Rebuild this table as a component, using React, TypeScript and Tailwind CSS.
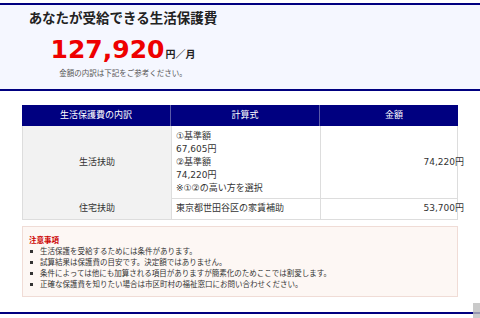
export default function App() {
  const notes = [
    "生活保護を受給するためには条件があります。",
    "試算結果は保護費の目安です。決定額ではありません。",
    "条件によっては他にも加算される項目がありますが簡素化のためここでは割愛します。",
    "正確な保護費を知りたい場合は市区町村の福祉窓口にお問い合わせください。",
  ];
  return (
    <div className="relative w-[480px] h-[318px] overflow-hidden bg-white font-['DejaVu_Sans','Noto_Sans_CJK_JP',sans-serif] text-[#333]">
      <div className="pt-[3px]">
        <div className="h-[88px] border-y-2 border-[#000080] bg-[#f5f7ff]">
          <div className="w-[246px] text-center">
            <div className="h-[26px] text-[13.5px] font-bold leading-[26px] text-[#222]">
              あなたが受給できる生活保護費
            </div>
            <div className="mt-[4px] flex h-[30px] items-baseline justify-center">
              <span className="text-[25px] font-bold leading-[30px] text-[#ee0000]">127,920</span>
              <span className="ml-[1px] text-[10px] font-bold text-[#222]">円／月</span>
            </div>
            <div className="mt-[3px] text-[7.5px] leading-[12px] text-[#555]">
              金額の内訳は下記をご参考ください。
            </div>
          </div>
        </div>

        <div className="mx-[22px] mt-[14px] text-[9px]">
          <div className="grid h-[21px] grid-cols-[148px_149px_149px] bg-[#000080] text-white">
            <div className="flex items-center justify-center">生活保護費の内訳</div>
            <div className="flex items-center justify-center border-l border-[#5a5aa8]">計算式</div>
            <div className="flex items-center justify-center border-l border-[#5a5aa8]">金額</div>
          </div>
          <div className="grid h-[73px] grid-cols-[148px_149px_149px] border-x border-b border-[#dddddd]">
            <div className="flex items-center justify-center bg-[#f2f2f2]">生活扶助</div>
            <div className="border-l border-[#dddddd] px-[4px] py-[4px] leading-[13px]">
              <div>①基準額</div>
              <div>67,605円</div>
              <div>②基準額</div>
              <div>74,220円</div>
              <div>※①②の高い方を選択</div>
            </div>
            <div className="flex items-center justify-end border-l border-[#dddddd] pr-[5px]">74,220円</div>
          </div>
          <div className="grid h-[21px] grid-cols-[148px_149px_149px] border-x border-b border-[#dddddd]">
            <div className="flex items-center justify-center bg-[#f2f2f2]">住宅扶助</div>
            <div className="flex items-center border-l border-[#dddddd] px-[4px]">東京都世田谷区の家賃補助</div>
            <div className="flex items-center justify-end border-l border-[#dddddd] pr-[5px]">53,700円</div>
          </div>
        </div>

        <div className="mx-[22px] mt-[6px] h-[71px] border border-[#f0dcd6] bg-[#fdf7f4] pl-[6px] pt-[8px] text-[7.5px] leading-[11px]">
          <div className="font-bold text-[#cc0000]">注意事項</div>
          {notes.map((n) => (
            <div key={n} className="flex items-center">
              <span className="ml-[1px] mr-[7px] h-[3px] w-[3px] bg-[#333]"></span>
              <span>{n}</span>
            </div>
          ))}
        </div>

        <div className="mt-[15px] h-[2px] bg-[#000080]"></div>
      </div>
      <div className="absolute bottom-0 right-0 h-[15px] w-[7px] bg-[#bdbdbd]/80"></div>
    </div>
  );
}
